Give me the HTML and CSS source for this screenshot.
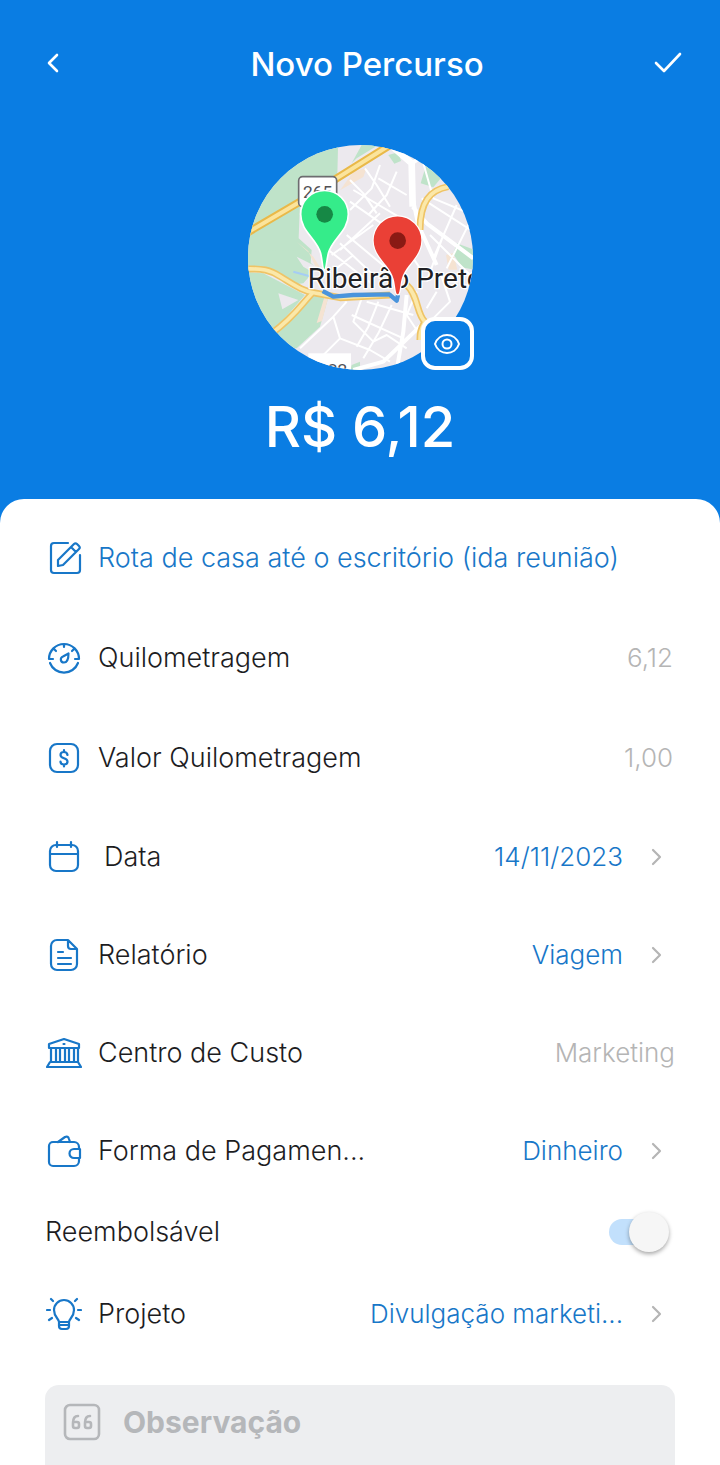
FILE: index.html
```html
<!DOCTYPE html>
<html lang="pt-BR">
<head>
<meta charset="utf-8">
<meta name="viewport" content="width=device-width, initial-scale=1">
<title>Novo Percurso</title>
<link rel="stylesheet" href="styles.css">
</head>
<body>
<div class="page">
  <header class="hero">
    <nav class="topbar">
      <button class="icon-button" type="button" aria-label="Voltar">
        <svg width="36" height="36" viewBox="0 0 36 36"><path class="line-bold" d="M23 9l-8 8 8 8"/></svg>
      </button>
      <h1 class="title">Novo Percurso</h1>
      <button class="icon-button" type="button" aria-label="Salvar">
        <svg width="36" height="36" viewBox="0 0 36 36"><path class="line-bold" d="M6 17l8 8L30 8"/></svg>
      </button>
    </nav>
    <div class="map">
      <svg class="map-image" viewBox="24 30 675 675" role="img" aria-label="Mapa do percurso">
        <rect x="0" y="0" width="720" height="720" fill="#ece9ee"/>
        <g fill="#bfe3c9">
          <path d="M0 0H295L292 120L180 200L176 310L215 345L212 385L165 400L120 360L0 430Z"/>
          <path d="M0 350L170 345L230 400L190 445L150 450L80 410L0 400Z"/>
          <path d="M0 410L70 415L195 480L100 590L20 500Z"/>
          <path d="M215 480L268 476L240 575L170 640L60 640Z"/>
          <path d="M365 30L415 30L350 70L335 85Z"/>
          <path d="M445 60l30-8 8 26-20 8z"/>
          <path d="M560 85l45 42-25 30-38-12z"/>
          <path d="M650 325l55 20v60l-40-8-25-40z"/>
          <path d="M335 690l25-10v30h-30z"/>
        </g>
        <path fill="#ece9ee" d="M115 475l60 20-48 28zM170 365l60 30 10 30-50-30z"/>
        <path fill="#f5e3d2" d="M340 110l40-12-10 28-70 40zM170 320l50 45 25 40-18-8-22-48zM268 476l-22 82-16 6 26-88zM618 360l22-6 12 50h-26z"/>
        <g fill="none" stroke="#fff" stroke-width="6" stroke-linejoin="round">
          <path stroke-width="20" d="M452 30L515 85L518 215"/>
          <path stroke-width="12" d="M518 215L560 265L700 370M518 190L535 270L590 390M500 480L490 590L470 705M555 560L430 680L340 705M515 85L600 30"/>
          <path d="M375 100L410 150L450 215M330 135L370 175L410 235M420 90L395 160L330 225M470 110L440 180L385 240M415 130L500 180M340 165L510 265M330 200L460 290M300 345L420 235M275 360L400 270M300 325L400 420M320 300L440 400M340 360L290 400M265 345L400 450M550 85L580 190L700 240M545 190L700 290M650 210L580 370M690 260L620 400M535 280L500 340L540 400M570 300L690 420M610 300L560 440"/>
          <path d="M320 500L280 545L300 610L390 645L450 680M280 545L180 640M365 490L340 560L400 620L440 600L500 640M335 540L490 610M415 500L385 575L350 635M455 510L415 595L370 670M380 500L520 540M300 610L240 670M530 470L500 540L540 600M590 470L560 520M600 410L630 500L570 560"/>
        </g>
        <g fill="none" stroke-linejoin="round">
          <path stroke="#e9b949" stroke-width="24" d="M10 300L180 200L290 130L450 30"/>
          <path stroke="#fbe49c" stroke-width="12" d="M10 300L180 200L290 130L450 30"/>
          <path stroke="#efc466" stroke-width="21" d="M10 402C70 400 90 405 120 424C160 448 190 470 225 474L300 488L450 480M218 474C190 500 165 545 95 595M625 155C570 165 540 200 540 285M500 450C535 480 530 540 555 560C540 585 540 600 540 615"/>
          <path stroke="#fbe8a9" stroke-width="11" d="M10 402C70 400 90 405 120 424C160 448 190 470 225 474L300 488L450 480M218 474C190 500 165 545 95 595M625 155C570 165 540 200 540 285M500 450C535 480 530 540 555 560C540 585 540 600 540 615"/>
          <path stroke="#a5cdf4" stroke-width="6" d="M160 410L215 425L250 445"/>
          <path stroke="#4a94dc" stroke-width="13" d="M248 468L280 485L340 480L448 478L470 497L474 480"/>
        </g>
        <rect x="176" y="125" width="114" height="90" rx="12" fill="#fff" stroke="#6d6d70" stroke-width="5"/>
        <text class="map-road" x="233" y="190">265</text>
        <rect x="205" y="655" width="128" height="60" fill="#fff"/>
        <text class="map-road" x="278" y="722">322</text>
        <text class="map-city" x="203" y="460">Ribeirão Preto</text>
        <path fill="#35ec8a" stroke="#fff" stroke-width="5" d="M253 405C247 405 248 380 242 355C230 310 182 290 182 238A71 71 0 0 1 325 238C325 290 277 310 265 355C259 380 259 405 253 405Z"/>
        <circle cx="254" cy="238" r="25" fill="#168845"/>
        <path fill="#ea4036" stroke="#fff" stroke-width="7" paint-order="stroke" d="M473 478C466 478 467 455 461 432C449 387 401 367 401 316A71 71 0 0 1 544 316C544 367 497 387 485 432C479 455 480 478 473 478Z"/>
        <circle cx="473" cy="317" r="25" fill="#8a1a14"/>
      </svg>
      <button class="map-view" type="button" aria-label="Ver mapa">
        <svg width="30" height="30" viewBox="0 0 30 30"><path class="line" d="M3 15C7 3 23 3 27 15C23 27 7 27 3 15Z"/><circle class="line" cx="15" cy="15" r="4.500"/></svg>
      </button>
    </div>
    <p class="amount">R$ 6,12</p>
  </header>

  <main class="sheet">
    <div class="row row-tall">
      <svg class="icon" viewBox="0 0 36 36"><path class="line" d="M22 3H8a3 3 0 0 0-3 3v24a3 3 0 0 0 3 3h23a3 3 0 0 0 3-3V15M12 26v-6L28 4q1.500-1.500 3 0l2 2q1.500 1.500 0 3L17 25l-5 1M25 7l5 5"/></svg>
      <input class="field field-route" type="text" aria-label="Descrição" value="Rota de casa até o escritório (ida reunião)">
    </div>
    <div class="row row-tall">
      <svg class="icon" viewBox="0 0 36 36"><path class="line" d="M7 19H3a15 15 0 1 1 30 0h-4M4 23a15 15 0 0 0 28 0M18 4v3M8 9l2 2M28 9l-2 2M22.500 13.500c0 4.500-.5 9-4.500 9c-4 0-4-5-1-6z"/></svg>
      <label class="label" for="km">Quilometragem</label>
      <input class="field field-number" id="km" type="text" value="6,12">
    </div>
    <div class="row row-tall">
      <svg class="icon" viewBox="0 0 36 36"><rect class="line" x="4" y="4" width="28" height="28" rx="7"/><path class="line" d="M21.500 15c-.5-4-7-4-7 0c0 4 7 2.500 7 6.500c0 4-7 4-7 0M18 10v2M18 24.500v2"/></svg>
      <label class="label" for="rate">Valor Quilometragem</label>
      <input class="field field-number" id="rate" type="text" value="1,00">
    </div>
    <div class="row">
      <svg class="icon" viewBox="0 0 36 36"><rect class="line" x="4" y="6" width="28" height="26" rx="6"/><path class="line" d="M4 15h28M11 3v5M25 3v5"/></svg>
      <span class="label label-date" id="date-label">Data</span>
      <button class="picker" type="button" aria-describedby="date-label"><span>14/11/2023</span><svg class="chevron" viewBox="0 0 12 18"><path class="line" d="M2 2l7 7-7 7"/></svg></button>
    </div>
    <div class="row">
      <svg class="icon" viewBox="0 0 36 36"><path class="line" d="M22 3H11a6 6 0 0 0-6 6v18a6 6 0 0 0 6 6h14a6 6 0 0 0 6-6V12zM22 3v6a3 3 0 0 0 3 3h6M12 15h5M12 21h13M12 27h13"/></svg>
      <span class="label" id="report-label">Relatório</span>
      <button class="picker" type="button" aria-describedby="report-label"><span>Viagem</span><svg class="chevron" viewBox="0 0 12 18"><path class="line" d="M2 2l7 7-7 7"/></svg></button>
    </div>
    <div class="row">
      <svg class="icon" viewBox="0 0 36 36"><path class="line" d="M3 13V9L18 4L33 9v4zM5 13v14M10 13v14M14 13v14M19 13v14M23 13v14M28 13v14M32 13v14M4 27h28l3 5H1zM17.500 9h1"/></svg>
      <span class="label">Centro de Custo</span>
      <span class="value-muted">Marketing</span>
    </div>
    <div class="row">
      <svg class="icon" viewBox="0 0 36 36"><path class="line" d="M33 15v-1a5 5 0 0 0-5-5H7a4 4 0 0 0-4 4v16a4 4 0 0 0 4 4h21a5 5 0 0 0 5-5v-2M34 16h-6a4.500 4.500 0 0 0 0 9h6zM12 9l7-5q3-1.500 4 2l1 3"/></svg>
      <span class="label" id="payment-label">Forma de Pagamen...</span>
      <button class="picker" type="button" aria-describedby="payment-label"><span>Dinheiro</span><svg class="chevron" viewBox="0 0 12 18"><path class="line" d="M2 2l7 7-7 7"/></svg></button>
    </div>
    <div class="row row-short">
      <label class="label" for="refund">Reembolsável</label>
      <input class="switch" id="refund" type="checkbox" role="switch" checked>
    </div>
    <div class="row row-tall">
      <svg class="icon" viewBox="0 0 36 36"><path class="line" d="M13 26c0-3-5-5-5-12a10 10 0 0 1 20 0c0 7-5 9-5 12zM13 26v4a3 3 0 0 0 3 3h4a3 3 0 0 0 3-3v-4M13 29h10M1 14h3M32 14h3M5 3l2 2M31 3l-2 2M3 24l3-2M33 24l-3-2"/></svg>
      <span class="label" id="project-label">Projeto</span>
      <button class="picker" type="button" aria-describedby="project-label"><span>Divulgação marketi...</span><svg class="chevron" viewBox="0 0 12 18"><path class="line" d="M2 2l7 7-7 7"/></svg></button>
    </div>
    <div class="note">
      <svg class="note-icon" viewBox="0 0 38 38"><rect class="line-bold" x="2" y="2" width="34" height="34" rx="5"/><path class="line-bold" d="M15 13c-4 0-5 3-5 7v3q0 2 2 2h2q2 0 2-2v-2q0-2-2-2h-4M27 13c-4 0-5 3-5 7v3q0 2 2 2h2q2 0 2-2v-2q0-2-2-2h-4"/></svg>
      <textarea class="note-text" rows="1" aria-label="Observação" placeholder="Observação"></textarea>
    </div>
  </main>
</div>
</body>
</html>
```
FILE: styles.css
```css
* {
  box-sizing: border-box;
}

body {
  margin: 0;
  background: #0a7de3;
  color: #1d1d1f;
  font-family: "Inter", "Open Sans", sans-serif;
  font-size: 26px;
  font-weight: 300;
  line-height: 36px;
}

button,
input,
textarea {
  margin: 0;
  padding: 0;
  border: 0;
  background: none;
  color: inherit;
  font: inherit;
}

svg {
  display: block;
  flex-shrink: 0;
}

.line,
.line-bold {
  fill: none;
  stroke: currentColor;
  stroke-width: 2.2;
  stroke-linecap: round;
  stroke-linejoin: round;
}

.line-bold {
  stroke-width: 2.6;
}

.page {
  display: flex;
  flex-direction: column;
  min-height: 100vh;
}

.hero {
  display: flex;
  flex-direction: column;
  align-items: center;
  padding-bottom: 36px;
  color: #fff;
}

.topbar {
  display: flex;
  align-items: center;
  justify-content: space-between;
  align-self: stretch;
  height: 128px;
  padding: 0 34px;
}

.title {
  margin: 0;
  padding-left: 14px;
  font-size: 33px;
  font-weight: 500;
}

.map {
  position: relative;
  width: 225px;
  margin-top: 17px;
}

.map-image {
  width: 100%;
  border-radius: 50%;
}

.map-road {
  fill: #505054;
  font-family: Roboto, sans-serif;
  font-size: 52px;
  font-weight: 400;
  text-anchor: middle;
}

.map-city {
  fill: #202024;
  stroke: #fff;
  stroke-width: 8px;
  paint-order: stroke;
  font-family: Roboto, sans-serif;
  font-size: 84px;
  font-weight: 400;
}

.map-view {
  position: absolute;
  right: -1px;
  bottom: 0;
  display: grid;
  place-items: center;
  width: 53px;
  height: 53px;
  border: 4px solid #fff;
  border-radius: 14px;
  background: #0a7de3;
}

.map-view .line {
  stroke-width: 2;
}

.amount {
  margin: 21px 0 0;
  font-size: 56px;
  font-weight: 500;
  line-height: 72px;
}

.sheet {
  display: flex;
  flex: 1;
  flex-direction: column;
  padding: 9px 45px 0;
  border-radius: 24px 24px 0 0;
  background: #fff;
}

.row {
  display: flex;
  align-items: center;
  gap: 16px;
  height: 98px;
}

.row-tall {
  height: 100px;
}

.row-short {
  height: 64px;
}

.icon {
  width: 37px;
  height: 36px;
  padding-left: 1px;
  color: #1877c8;
}

.label {
  font-size: 27px;
  white-space: nowrap;
}

.label-date {
  padding-left: 6px;
}

.field {
  flex: 1;
  min-width: 0;
}

.field-route {
  color: #1877c8;
  font-size: 27px;
}

.field-number {
  padding-right: 2px;
  color: #b5b5b5;
  text-align: right;
}

.value-muted {
  margin-left: auto;
  color: #b5b5b5;
}

.picker {
  display: flex;
  align-items: center;
  gap: 28px;
  margin-left: auto;
  padding-right: 12px;
  color: #1877c8;
  white-space: nowrap;
}

.chevron {
  width: 12px;
  height: 18px;
  color: #b5b5b5;
}

.switch {
  position: relative;
  width: 58px;
  height: 26px;
  margin: 0 8px 0 auto;
  border-radius: 13px;
  background: #c2e0fc;
  appearance: none;
}

.switch::before {
  position: absolute;
  top: -7px;
  right: -2px;
  width: 40px;
  height: 40px;
  border-radius: 50%;
  background: #f6f6f6;
  box-shadow: 0 2px 4px rgba(0, 0, 0, 0.35);
  content: "";
}

.switch:not(:checked)::before {
  right: 20px;
}

.note {
  display: flex;
  flex: 1;
  align-items: flex-start;
  gap: 22px;
  min-height: 80px;
  margin-top: 21px;
  padding: 18px 18px 0;
  border-radius: 14px 14px 0 0;
  background: #edeef0;
  color: #b5b7ba;
}

.note-icon {
  width: 38px;
  height: 38px;
}

.note-text {
  flex: 1;
  min-width: 0;
  height: 38px;
  outline: 0;
  font-size: 30px;
  font-weight: 700;
  line-height: 38px;
  resize: none;
}

.note-text::placeholder {
  color: #b5b7ba;
  opacity: 1;
}
```
